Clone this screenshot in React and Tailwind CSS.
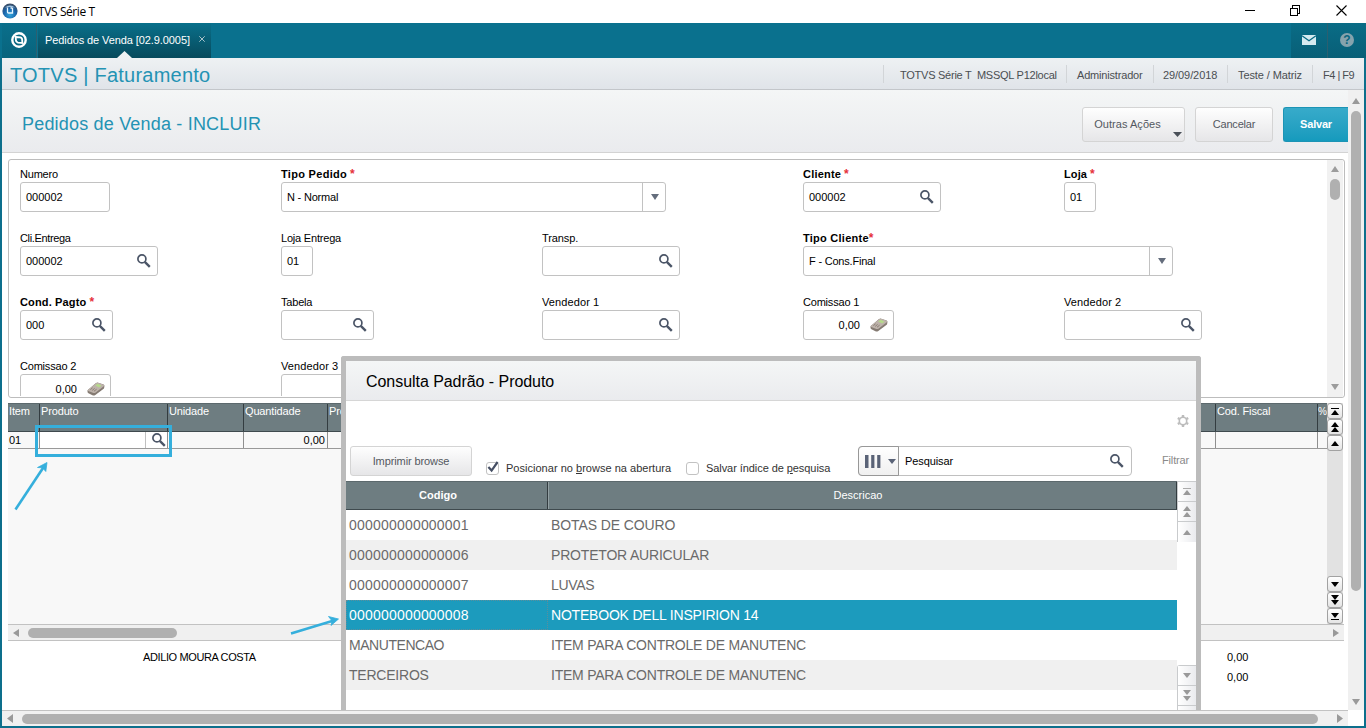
import React from 'react';
import clsx from 'clsx';

const gridColumns = [
  { label: 'Item', width: 'w-[32px]' },
  { label: 'Produto', width: 'w-[128px]' },
  { label: 'Unidade', width: 'w-[76px]' },
  { label: 'Quantidade', width: 'w-[84px]', value: '0,00' },
  { label: 'Prc', width: 'w-[888px]' },
  { label: 'Cod. Fiscal', width: 'w-[102px]' },
  { label: '%', width: 'w-[9px]', last: true },
];

const products = [
  { code: '000000000000001', name: 'BOTAS DE COURO', codeFit: 'tracking-[0.2px]', nameFit: 'tracking-[-0.1px]' },
  { code: '000000000000006', name: 'PROTETOR AURICULAR', codeFit: 'tracking-[0.2px]', nameFit: 'tracking-[-0.19px]' },
  { code: '000000000000007', name: 'LUVAS', codeFit: 'tracking-[0.2px]', nameFit: 'tracking-[-0.35px]' },
  { code: '000000000000008', name: 'NOTEBOOK DELL INSPIRION 14', codeFit: 'tracking-[0.2px]', nameFit: 'tracking-[-0.2px]', selected: true },
  { code: 'MANUTENCAO', name: 'ITEM PARA CONTROLE DE MANUTENC', codeFit: 'tracking-[-0.45px]', nameFit: 'tracking-[-0.23px]' },
  { code: 'TERCEIROS', name: 'ITEM PARA CONTROLE DE MANUTENC', codeFit: 'tracking-[-0.22px]', nameFit: 'tracking-[-0.23px]' },
];

/* ---------- icons ---------- */

const paths = {
  up: 'M4 0 L8 6 L0 6 Z',
  down: 'M0 0 L8 0 L4 6 Z',
  left: 'M6 0 L6 8 L0 4 Z',
  right: 'M0 0 L6 4 L0 8 Z',
};

function Arrow({ dir, className }) {
  const vertical = dir === 'up' || dir === 'down';
  return (
    <svg viewBox={vertical ? '0 0 8 6' : '0 0 6 8'} preserveAspectRatio="none" className={clsx('shrink-0', className)} fill="currentColor">
      <path d={paths[dir]} />
    </svg>
  );
}

function SearchIcon({ className }) {
  return (
    <svg viewBox="0 0 14 14" className={clsx('h-[14px] w-[14px] shrink-0 text-[#4b5567]', className)} fill="none" stroke="currentColor">
      <circle cx="4.9" cy="4.9" r="4" strokeWidth="1.7" />
      <path d="M7.8 7.8 L12.8 12.8" strokeWidth="2.4" />
    </svg>
  );
}

function CalculatorIcon() {
  return (
    <svg viewBox="0 0 18 14" className="h-[14px] w-[18px] shrink-0">
      <path d="M0.5 8.2 L9 1 Q10.5 0.3 12 0.9 L16.6 2.6 Q17.8 3.2 17.4 4.4 L17 6.4 L8 13.2 Q6.8 13.8 5.4 13.2 L1 11 Q0.3 10.4 0.5 8.2 Z" fill="#857b73" />
      <path d="M0.8 8 L9 1.2 Q10.5 0.5 12 1.1 L16.6 2.8 Q17.6 3.5 16.8 4.3 L8.4 10.8 Q7.2 11.4 5.8 10.8 L1.2 9 Z" fill="#bdb2aa" />
      <path d="M8.2 3.6 L10.6 1.8 L14.6 3.4 L12.2 5.4 Z" fill="#b6d98c" />
      <path d="M3.4 7.6 L5.6 5.8 M5.2 8.4 L7.6 6.4 M7 9.2 L9.6 7.2" stroke="#8b7f76" strokeWidth="1" />
    </svg>
  );
}

function ColumnsIcon() {
  return (
    <svg viewBox="0 0 16 13" className="h-[13px] w-[16px] text-[#5a6377]" fill="currentColor">
      <path d="M0 0h3.5v13H0zM6.2 0h3.2v13H6.2zM12.2 0h3.2v13h-3.2z" />
    </svg>
  );
}

function GearIcon() {
  return (
    <svg viewBox="0 0 12 12" className="h-[12px] w-[12px] text-[#bcbcbc]" fill="none" stroke="currentColor">
      <circle cx="6" cy="6" r="3.7" strokeWidth="1.6" />
      <path d="M6 0v2M6 10v2M0.8 3l1.8 1M9.4 8l1.8 1M0.8 9l1.8-1M9.4 4l1.8-1" strokeWidth="2.4" />
    </svg>
  );
}

/* ---------- form pieces ---------- */

function Field({ label, fit = 'tracking-[-0.2px]', width, value, required, tight, icon }) {
  return (
    <div className="h-[64px] w-[261px] pt-[6px]">
      <div className={clsx('h-[16px] whitespace-nowrap leading-[16px]', required && 'font-bold', fit)}>
        {label}
        {required && <span className={clsx('text-[12px] text-[#e5303a]', !tight && 'ml-[3px]')}>*</span>}
      </div>
      <div className={clsx('flex h-[30px] items-center rounded-[3px] border border-[#c2c2c2] bg-white', width)}>
        <span className={clsx('flex-1 whitespace-nowrap', icon === 'calc' && 'pr-[10px] text-right', icon === 'select' && 'pl-[5px] tracking-[-0.2px]', icon !== 'calc' && icon !== 'select' && 'pl-[5px]')}>{value}</span>
        {icon === 'search' && <SearchIcon className="mr-[6px]" />}
        {icon === 'calc' && <span className="mr-[5px]"><CalculatorIcon /></span>}
        {icon === 'select' && (
          <span className="flex h-[28px] w-[23px] items-center justify-center border-l border-[#c2c2c2] pl-[2px]">
            <Arrow dir="down" className="mb-px h-[6px] w-[8px] text-[#646d7c]" />
          </span>
        )}
      </div>
    </div>
  );
}

function GhostButton({ className, children }) {
  return (
    <button className={clsx('rounded-[3px] border border-[#d4d4d4] bg-linear-to-b from-[#fefefe] to-[#e6e6e8] text-[#54585f]', className)}>
      {children}
    </button>
  );
}

function StepButton({ kind }) {
  return (
    <button className="flex h-[16px] w-[16px] flex-col items-center justify-center rounded-[3px] border border-[#a2a2a2] bg-linear-to-b from-white to-[#e4e4e4] text-black">
      {kind === 'first' && <><span className="mb-px h-px w-[8px] bg-black" /><Arrow dir="up" className="h-[5px] w-[8px]" /></>}
      {kind === 'pageUp' && <><Arrow dir="up" className="h-[5px] w-[8px]" /><Arrow dir="up" className="h-[5px] w-[8px]" /></>}
      {kind === 'up' && <Arrow dir="up" className="h-[5px] w-[8px]" />}
      {kind === 'down' && <Arrow dir="down" className="h-[5px] w-[8px]" />}
      {kind === 'pageDown' && <><Arrow dir="down" className="h-[5px] w-[8px]" /><Arrow dir="down" className="h-[5px] w-[8px]" /></>}
      {kind === 'last' && <><Arrow dir="down" className="h-[5px] w-[8px]" /><span className="mt-px h-px w-[8px] bg-black" /></>}
    </button>
  );
}

function BrowseStep({ kind, className }) {
  return (
    <div className={clsx('flex w-full flex-col items-center justify-center border-b border-[#c9cbcd] bg-linear-to-r from-white to-[#eaebee] text-[#999]', className)}>
      {kind === 'first' && <><span className="mb-px h-px w-[8px] bg-[#aaa]" /><Arrow dir="up" className="h-[5px] w-[8px]" /></>}
      {kind === 'pageUp' && <><Arrow dir="up" className="h-[5px] w-[8px]" /><Arrow dir="up" className="mt-px h-[5px] w-[8px]" /></>}
      {kind === 'up' && <Arrow dir="up" className="h-[5px] w-[8px]" />}
      {kind === 'down' && <Arrow dir="down" className="h-[5px] w-[8px]" />}
      {kind === 'pageDown' && <><Arrow dir="down" className="h-[5px] w-[8px]" /><Arrow dir="down" className="mt-px h-[5px] w-[8px]" /></>}
    </div>
  );
}

/* ---------- window chrome ---------- */

function TitleBar() {
  return (
    <div className="flex h-[23px] shrink-0 items-center bg-white pl-[2px]">
      <svg viewBox="0 0 16 16" className="-mt-px h-[16px] w-[16px]">
        <defs>
          <radialGradient id="ball" cx="0.5" cy="0.75" r="0.7">
            <stop offset="0" stopColor="#2fa4dc" />
            <stop offset="0.6" stopColor="#1a62a8" />
            <stop offset="1" stopColor="#3c4f68" />
          </radialGradient>
        </defs>
        <circle cx="8" cy="8" r="7.6" fill="url(#ball)" />
        <path d="M3 4.5 Q8 0.5 13 4.5 Q8 3.5 3 4.5Z" fill="#9fc2de" />
        <path d="M5.5 4.5 v4.5 q0 1 1 1 h4 v-5 M8.5 5 h2" fill="none" stroke="#e8f6ff" strokeWidth="1.3" />
      </svg>
      <span className="ml-[5px] font-['Open_Sans','Noto_Sans',sans-serif] text-[12px] tracking-[-0.42px] text-black">TOTVS Série T</span>
      <svg viewBox="0 0 110 12" className="mt-[5px] mr-[18px] ml-auto h-[12px] w-[110px] self-start" fill="none" stroke="#000" shapeRendering="crispEdges">
        <path d="M7 5.5 h10" />
        <path d="M52.5 3.5 h7 v7 h-7 z M54.5 3 v-2.5 h7 v7.5 h-2" />
        <path d="M98.5 0.5 l10 10 M108.5 0.5 l-10 10" shapeRendering="auto" strokeWidth="1.1" />
      </svg>
    </div>
  );
}

function NavBar() {
  return (
    <div className="flex h-[35px] shrink-0 bg-[#0a718e] text-white">
      <div className="ml-[2px] flex w-[35px] items-center justify-center border-r border-[#2b5f70] bg-linear-to-b from-[#0a6f8b] to-[#08647d]">
        <svg viewBox="0 0 16 16" className="mb-px h-[16px] w-[16px]" fill="none" stroke="#fff">
          <circle cx="8" cy="8" r="6.7" strokeWidth="2.4" />
          <path d="M4.6 5 L9.4 5.4 Q11.4 6 11.2 8.4 L11.4 11 L7 10.6 Q4.8 10 4.9 7.6 Z" strokeWidth="1.8" />
        </svg>
      </div>
      <div className="relative ml-px flex w-[173px] items-center bg-linear-to-b from-[#09708b] to-[#074a5c] pl-[7px]">
        <span className="whitespace-nowrap tracking-[-0.09px]">Pedidos de Venda [02.9.0005]</span>
        <svg viewBox="0 0 6 6" className="mr-[6px] mb-[3px] ml-auto h-[6px] w-[6px]" stroke="#a9c3cb"><path d="M0.3 0.3 L5.7 5.7 M5.7 0.3 L0.3 5.7" /></svg>
        <Arrow dir="up" className="absolute bottom-0 left-[79px] h-[7px] w-[15px] text-[#eef1f2]" />
      </div>
      <div className="ml-auto flex w-[36px] items-center justify-center bg-linear-to-b from-[#0a6c86] to-[#085f77]">
        <svg viewBox="0 0 14 10" className="mb-px h-[10px] w-[14px]">
          <path d="M0 0h14v10H0z" fill="#d6eaf0" />
          <path d="M0 0.8 L7 5.8 L14 0.8" fill="none" stroke="#0a6a84" strokeWidth="1.3" />
        </svg>
      </div>
      <div className="flex w-[39px] items-center justify-center border-l border-[#2b5f70] bg-linear-to-b from-[#0a6c86] to-[#085f77]">
        <span className="mb-px flex h-[14px] w-[14px] items-center justify-center rounded-full bg-[#86a3ad] text-[12px] font-bold leading-none text-[#0a657e]">?</span>
      </div>
    </div>
  );
}

function InfoBar() {
  return (
    <div className="flex h-[32px] shrink-0 items-center border-b border-[#c3c6ca] bg-linear-to-b from-[#eef1f3] to-[#e0e4e9] text-[#4a4e52]">
      <h1 className="pt-[2px] pl-[8px] text-[20px] tracking-[0.23px] text-[#2493b4]">TOTVS | Faturamento</h1>
      <div className="ml-auto flex h-[18px] whitespace-nowrap leading-[20px]">
        <span className="w-[183px] border-l border-[#d2d5d8] pl-[16px] tracking-[-0.25px] whitespace-pre">TOTVS Série T  MSSQL P12local</span>
        <span className="w-[87px] border-l border-[#d2d5d8] pl-[10px] tracking-[-0.18px]">Administrador</span>
        <span className="w-[74px] border-l border-[#d2d5d8] pl-[9px] tracking-[-0.08px]">29/09/2018</span>
        <span className="w-[85px] border-l border-[#d2d5d8] pl-[10px] tracking-[-0.1px]">Teste / Matriz</span>
        <span className="w-[52px] border-l border-[#d2d5d8] pl-[10px] tracking-[-0.5px]">F4 | F9</span>
      </div>
    </div>
  );
}

/* ---------- order form ---------- */

function OrderForm() {
  return (
    <div className="mt-[6px] ml-[6px] flex h-[239px] w-[1337px] shrink-0 overflow-hidden rounded-[3px] border border-[#bdbdbd] bg-white">
      <div className="mb-px grid flex-1 grid-cols-[repeat(5,261px)] content-start overflow-hidden pl-[11px]">
        <Field label="Numero" width="w-[90px]" value="000002" />
        <Field label="Tipo Pedido" fit="tracking-[0.3px]" required width="w-[385px]" value="N - Normal" icon="select" />
        <div />
        <Field label="Cliente" fit="tracking-[0.2px]" required width="w-[138px]" value="000002" icon="search" />
        <Field label="Loja" fit="tracking-[0.1px]" required width="w-[32px]" value="01" />

        <Field label="Cli.Entrega" fit="tracking-[-0.35px]" width="w-[138px]" value="000002" icon="search" />
        <Field label="Loja Entrega" width="w-[32px]" value="01" />
        <Field label="Transp." fit="tracking-[-0.1px]" width="w-[138px]" icon="search" />
        <Field label="Tipo Cliente" fit="tracking-[0.25px]" required tight width="w-[370px]" value="F - Cons.Final" icon="select" />
        <div />

        <Field label="Cond. Pagto" fit="tracking-[0.15px]" required width="w-[93px]" value="000" icon="search" />
        <Field label="Tabela" width="w-[93px]" icon="search" />
        <Field label="Vendedor 1" fit="tracking-[0.1px]" width="w-[138px]" icon="search" />
        <Field label="Comissao 1" width="w-[91px]" value="0,00" icon="calc" />
        <Field label="Vendedor 2" fit="tracking-[0.1px]" width="w-[138px]" icon="search" />

        <Field label="Comissao 2" width="w-[91px]" value="0,00" icon="calc" />
        <Field label="Vendedor 3" fit="tracking-[0.1px]" width="w-[138px]" icon="search" />
      </div>
      <div className="mr-px flex w-[16px] flex-col items-center bg-[#f1f1f1] pt-[6px] pb-[7px] text-[#9c9c9c]">
        <Arrow dir="up" className="h-[6px] w-[8px]" />
        <div className="mt-[7px] h-[21px] w-[10px] rounded-full bg-[#b0b0b0]" />
        <Arrow dir="down" className="mt-auto h-[6px] w-[8px]" />
      </div>
    </div>
  );
}

function ItemsGrid() {
  return (
    <div className="mt-[5px] ml-[6px] w-[1336px] shrink-0">
      <div className="flex h-[221px]">
        <div className="w-[1319px] bg-[#f8f8f8]">
          <div className="flex h-[29px] border-t border-b border-t-[#5c696d] border-b-[#3f4a4e] bg-[#6e7d81] leading-[15px] tracking-[-0.15px] text-white">
            {gridColumns.map((col) => (
              <div key={col.label} className={clsx('shrink-0 whitespace-nowrap', col.width, col.last ? 'text-[10px]' : 'border-r border-[#333c40] pl-[1px]')}>{col.label}</div>
            ))}
          </div>
          <div className="flex h-[17px] border-b border-[#999]">
            {gridColumns.map((col, i) => (
              <div key={col.label} className={clsx('flex shrink-0 items-center', !col.last && 'border-r border-[#8f8f8f]', col.width)}>
                {i === 0 && <span className="pl-[1px]">01</span>}
                {col.value && <span className="ml-auto pr-[2px]">{col.value}</span>}
                {i === 1 && (
                  <div className="flex h-full w-full items-center bg-white">
                    <span className="ml-auto h-full w-px bg-[#c0c0c0]" />
                    <SearchIcon className="mr-px ml-[6px]" />
                  </div>
                )}
              </div>
            ))}
          </div>
        </div>
        <div className="flex w-[16px] flex-col bg-[#e2e2e2]">
          <StepButton kind="first" />
          <StepButton kind="pageUp" />
          <StepButton kind="up" />
          <div className="flex-1" />
          <StepButton kind="down" />
          <StepButton kind="pageDown" />
          <StepButton kind="last" />
        </div>
      </div>
      <div className="flex h-[17px] items-center border-y border-[#c2c2c2] bg-[#f0f0f0] px-[5px] text-[#999]">
        <Arrow dir="left" className="h-[8px] w-[6px]" />
        <div className="ml-[9px] h-[10px] w-[149px] rounded-full bg-[#b0b0b0]" />
        <Arrow dir="right" className="ml-auto h-[8px] w-[6px]" />
      </div>
      <div className="flex pt-[6px] leading-[20px]">
        <div className="w-[1219px] pl-[135px] tracking-[-0.38px]">ADILIO MOURA COSTA</div>
        <div>
          <div>0,00</div>
          <div>0,00</div>
        </div>
      </div>
    </div>
  );
}

/* ---------- product lookup ---------- */

function ProductLookup() {
  return (
    <div className="absolute top-[356px] left-[341px] flex h-[354px] w-[860px] flex-col overflow-hidden rounded-t-[3px] border-x-[5px] border-t-[5px] border-[#bcbcbc] bg-white">
      <div className="h-[40px] shrink-0 border-b border-[#d6d6d6] bg-linear-to-b from-[#f4f6f6] to-[#eaebee] pl-[20px] text-[16px] leading-[41px] tracking-[-0.05px] text-black">
        Consulta Padrão - Produto
      </div>
      <div className="flex h-[45px] shrink-0 justify-end pt-[14px] pr-[7px]">
        <GearIcon />
      </div>
      <div className="flex h-[35px] shrink-0 pl-[4px]">
        <GhostButton className="h-[30px] w-[122px] tracking-[-0.1px]">Imprimir browse</GhostButton>
        <div className="ml-[14px] flex w-[200px] items-center pt-[9px] text-[#333]">
          <span className="flex h-[13px] w-[13px] items-center justify-center rounded-[3px] border border-[#c2c2c2] bg-white">
            <svg viewBox="0 0 13 13" className="mb-[3px] h-[13px] w-[13px] shrink-0" fill="none" stroke="#454e63" strokeWidth="2.2"><path d="M2.4 7 L5.6 10.6 L11.6 2" /></svg>
          </span>
          <span className="ml-[7px] whitespace-nowrap tracking-[0.02px]">Posicionar no <u>b</u>rowse na abertura</span>
        </div>
        <div className="flex w-[172px] items-center pt-[9px] text-[#333]">
          <span className="h-[13px] w-[13px] rounded-[3px] border border-[#c2c2c2] bg-white" />
          <span className="ml-[7px] whitespace-nowrap tracking-[-0.07px]">Salvar índice de <u>p</u>esquisa</span>
        </div>
        <div className="flex h-[30px] w-[274px] items-center rounded-[4px] border border-[#c0c0c0] bg-white">
          <div className="-ml-px flex h-[30px] w-[41px] shrink-0 items-center rounded-l-[4px] border border-[#989898] bg-linear-to-b from-white to-[#f0f0f0] pl-[6px]">
            <ColumnsIcon />
            <Arrow dir="down" className="ml-[7px] h-[5px] w-[8px] text-[#5a6377]" />
          </div>
          <span className="flex-1 pl-[6px] tracking-[-0.1px]">Pesquisar</span>
          <SearchIcon className="mr-[7px]" />
        </div>
        <span className="ml-[30px] text-[#8a8a8a] leading-[29px] tracking-[-0.15px]">Filtrar</span>
      </div>
      <div className="flex min-h-0 flex-1">
        <div className="w-[831px]">
          <div className="flex h-[29px] border-t border-b border-t-[#5c696d] border-b-[#3f4a4e] bg-[#6e7d81] text-center leading-[27px] text-white">
            <div className="w-[202px] border-r border-[#333c40] pr-[17px] font-bold">Codigo</div>
            <div className="w-[629px] border-r border-l border-r-[#333c40] border-l-[#93a0a3] pr-[9px]">Descricao</div>
          </div>
          {products.map((p, i) => (
            <div key={p.code} className={clsx('flex h-[30px] text-[14px] leading-[30px]', p.selected ? 'bg-[#1c9bbd] text-white' : i % 2 ? 'bg-[#f0f0f0] text-[#6a6a6a]' : 'bg-white text-[#6a6a6a]')}>
              <span className={clsx('w-[202px] pl-[3px]', p.codeFit, p.selected && 'outline-1 -outline-offset-1 outline-dotted outline-[#5d8d9b]')}>{p.code}</span>
              <span className={clsx('pl-[3px]', p.nameFit)}>{p.name}</span>
            </div>
          ))}
        </div>
        <div className="flex flex-1 flex-col">
          <div className="border-t border-l border-[#c9cbcd]">
            <BrowseStep kind="first" className="h-[20px]" />
            <BrowseStep kind="pageUp" className="h-[20px]" />
            <BrowseStep kind="up" className="h-[20px] border-b-0" />
          </div>
          <div className="mt-auto rounded-tl-[3px] border-t border-l border-[#c9cbcd]">
            <BrowseStep kind="down" className="h-[20px]" />
            <BrowseStep kind="pageDown" className="h-[20px]" />
            <BrowseStep className="h-[4px] border-b-0" />
          </div>
        </div>
      </div>
    </div>
  );
}

/* Callouts that point at the product field and at the chosen row */
function Callouts() {
  return (
    <>
      <div className="absolute top-[425px] left-[35px] h-[32px] w-[137px] border-3 border-[#35afdc]" />
      <svg viewBox="0 0 36 52" className="absolute top-[460px] left-[13px] h-[52px] w-[36px]" fill="none" stroke="#35afdc" strokeWidth="2.6">
        <path d="M2.5 49.5 L31 6.5" />
        <path d="M34 2.5 L24.5 7.5 L29.5 7.8 L32.8 11.5 Z" fill="#35afdc" strokeWidth="0.8" />
      </svg>
      <svg viewBox="0 0 52 24" className="absolute top-[614px] left-[289px] h-[24px] w-[52px]" fill="none" stroke="#35afdc" strokeWidth="2.6">
        <path d="M2 19.5 L44 6.8" />
        <path d="M49.5 5 L39.5 2.5 L43 6.8 L42 11.5 Z" fill="#35afdc" strokeWidth="0.8" />
      </svg>
    </>
  );
}

export default function App() {
  return (
    <div className="relative flex h-[728px] w-[1366px] flex-col overflow-hidden bg-white font-['Liberation_Sans',Arial,sans-serif] text-[11px] text-black">
      <TitleBar />
      <NavBar />
      <div className="flex min-h-0 flex-1 flex-col border-x-2 border-b-2 border-[#0d6f8c]">
        <InfoBar />
        <div className="flex h-[620px] shrink-0">
          <div className="flex w-[1346px] flex-col overflow-hidden">
            <div className="flex h-[63px] shrink-0 items-center border-b border-[#d3d3d3] bg-linear-to-b from-[#f4f6f6] to-[#eaebee] pt-[6px] pl-[20px]">
              <h2 className="text-[18px] tracking-[0.19px] text-[#2493b4]">Pedidos de Venda - INCLUIR</h2>
              <GhostButton className="relative ml-auto h-[35px] w-[103px] pr-[12px] tracking-[0.04px]">
                Outras Ações
                <Arrow dir="down" className="absolute right-[2px] bottom-[4px] h-[5px] w-[9px] text-[#4a5058]" />
              </GhostButton>
              <GhostButton className="ml-[10px] h-[35px] w-[78px] tracking-[-0.2px]">Cancelar</GhostButton>
              <button className="ml-[10px] h-[35px] w-[65px] rounded-l-[3px] border border-r-0 border-[#1c94b5] bg-linear-to-b from-[#37abca] to-[#159abd] font-bold tracking-[-0.2px] text-white">Salvar</button>
            </div>
            <OrderForm />
            <ItemsGrid />
          </div>
          <div className="flex w-[16px] flex-col items-center bg-[#f0f0f0] pt-[8px] pb-[5px] text-[#999]">
            <Arrow dir="up" className="h-[6px] w-[8px]" />
            <div className="mt-[7px] h-[480px] w-[10px] rounded-full bg-[#b0b0b0]" />
            <Arrow dir="down" className="mt-auto h-[6px] w-[8px]" />
          </div>
        </div>
        <div className="flex h-[16px] w-[1346px] items-center border-t border-[#c2c2c2] bg-[#f0f0f0] px-[5px] text-[#999]">
          <Arrow dir="left" className="h-[9px] w-[6px]" />
          <div className="ml-[9px] h-[10px] w-[1296px] rounded-full bg-[#b0b0b0]" />
          <Arrow dir="right" className="ml-auto h-[9px] w-[6px]" />
        </div>
      </div>
      <ProductLookup />
      <Callouts />
    </div>
  );
}
